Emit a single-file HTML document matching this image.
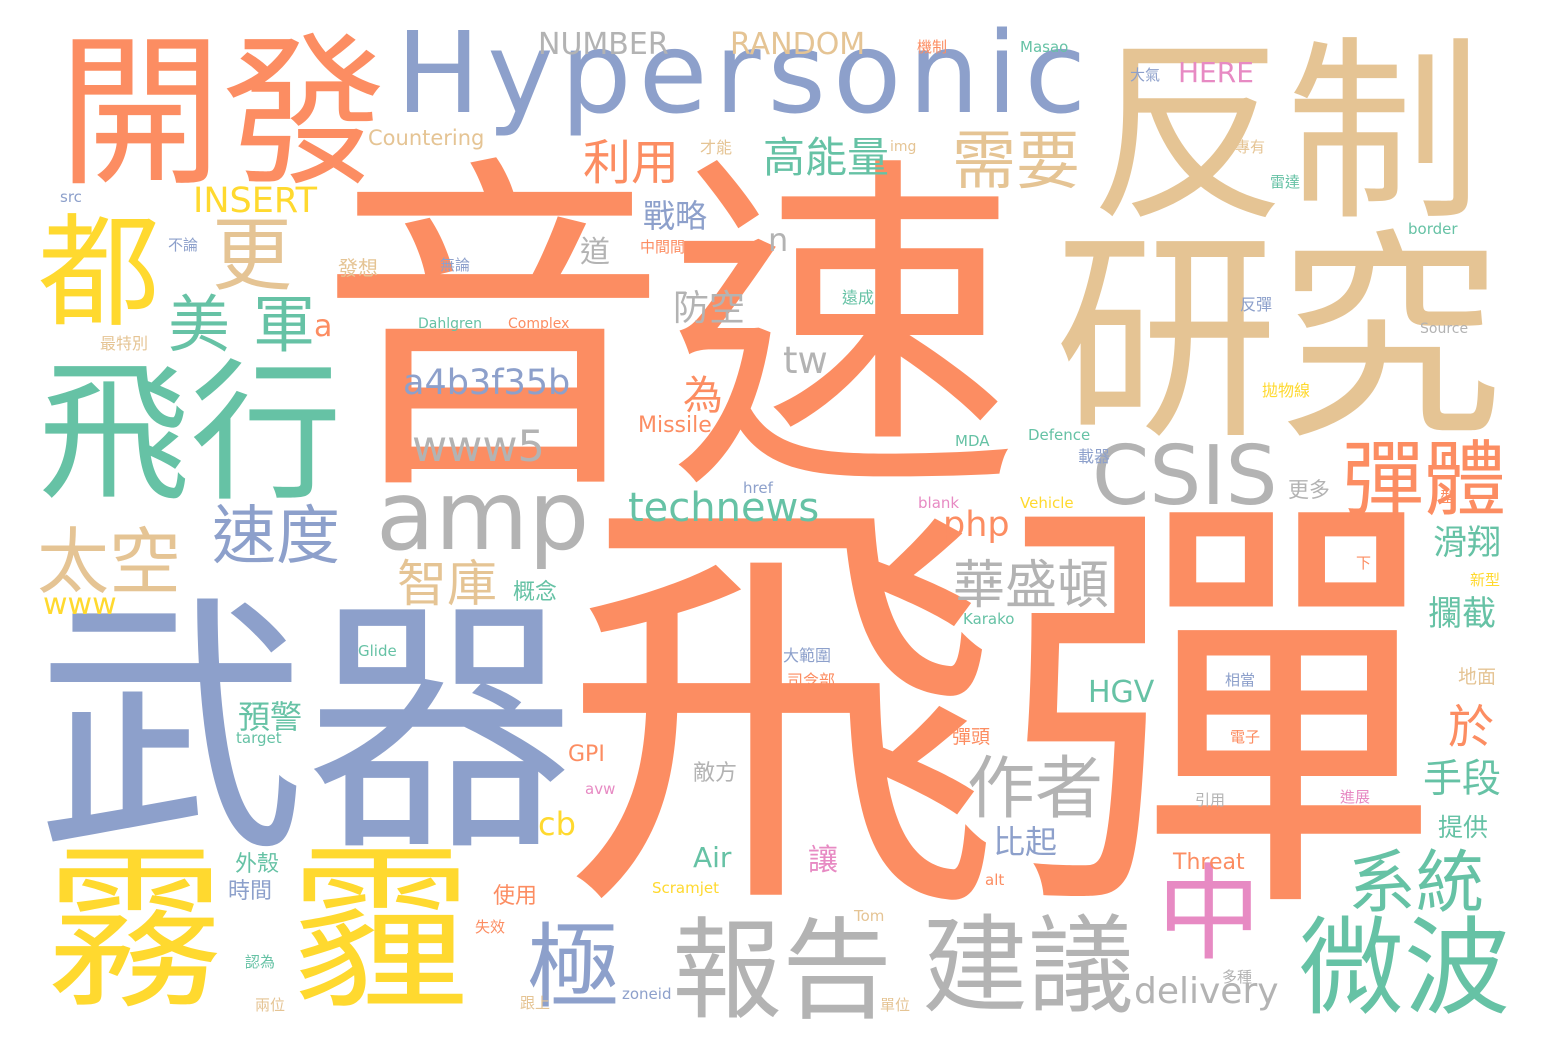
<!DOCTYPE html>
<html><head><meta charset="utf-8"><style>
html,body{margin:0;padding:0;background:#fff;}
body{width:1548px;height:1052px;position:relative;overflow:hidden;font-family:"DejaVu Sans","Noto Sans CJK TC",sans-serif;}
span{position:absolute;line-height:1;white-space:nowrap;}
.o{color:#fc8d62}.t{color:#e5c494}.b{color:#8da0cb}.g{color:#66c2a5}.y{color:#ffd92f}.s{color:#b3b3b3}.p{color:#e78ac3}.l{color:#a6d854}
</style></head><body>
<span class="o" style="left:318px;top:158px;font-size:350px">音速</span>
<span class="o" style="left:562px;top:494px;font-size:438px">飛彈</span>
<span class="b" style="left:36px;top:596px;font-size:270px">武器</span>
<span class="t" style="left:1090px;top:36px;font-size:196px">反制</span>
<span class="t" style="left:1054px;top:228px;font-size:224px">研究</span>
<span class="o" style="left:58px;top:32px;font-size:164px">開發</span>
<span class="b" style="left:396px;top:18px;font-size:112px;letter-spacing:7px">Hypersonic</span>
<span class="g" style="left:38px;top:358px;font-size:152px">飛行</span>
<span class="y" style="left:38px;top:212px;font-size:122px">都</span>
<span class="t" style="left:212px;top:216px;font-size:80px">更</span>
<span class="g" style="left:168px;top:294px;font-size:62px">美</span>
<span class="g" style="left:253px;top:294px;font-size:62px">軍</span>
<span class="o" style="left:314px;top:312px;font-size:30px">a</span>
<span class="y" style="left:46px;top:842px;font-size:178px">霧</span>
<span class="y" style="left:292px;top:842px;font-size:178px">霾</span>
<span class="s" style="left:672px;top:916px;font-size:110px">報告</span>
<span class="s" style="left:922px;top:914px;font-size:106px">建議</span>
<span class="g" style="left:1298px;top:916px;font-size:106px">微波</span>
<span class="b" style="left:527px;top:922px;font-size:92px">極</span>
<span class="p" style="left:1157px;top:862px;font-size:104px">中</span>
<span class="s" style="left:1134px;top:974px;font-size:36px">delivery</span>
<span class="g" style="left:1348px;top:850px;font-size:68px">系統</span>
<span class="s" style="left:1092px;top:436px;font-size:82px">CSIS</span>
<span class="o" style="left:1342px;top:440px;font-size:82px">彈體</span>
<span class="s" style="left:376px;top:468px;font-size:96px">amp</span>
<span class="b" style="left:212px;top:505px;font-size:64px">速度</span>
<span class="t" style="left:37px;top:526px;font-size:72px">太空</span>
<span class="t" style="left:952px;top:130px;font-size:64px">需要</span>
<span class="o" style="left:583px;top:139px;font-size:48px">利用</span>
<span class="g" style="left:763px;top:137px;font-size:42px">高能量</span>
<span class="s" style="left:967px;top:756px;font-size:68px">作者</span>
<span class="s" style="left:953px;top:560px;font-size:52px">華盛頓</span>
<span class="t" style="left:397px;top:559px;font-size:50px">智庫</span>
<span class="g" style="left:628px;top:488px;font-size:40px">technews</span>
<span class="b" style="left:403px;top:366px;font-size:35px">a4b3f35b</span>
<span class="s" style="left:412px;top:426px;font-size:43px">www5</span>
<span class="y" style="left:193px;top:184px;font-size:35px">INSERT</span>
<span class="s" style="left:538px;top:30px;font-size:30px">NUMBER</span>
<span class="t" style="left:730px;top:30px;font-size:30px">RANDOM</span>
<span class="t" style="left:368px;top:128px;font-size:21px">Countering</span>
<span class="b" style="left:643px;top:200px;font-size:32px">戰略</span>
<span class="s" style="left:673px;top:291px;font-size:36px">防空</span>
<span class="s" style="left:783px;top:342px;font-size:37px">tw</span>
<span class="s" style="left:768px;top:224px;font-size:32px">n</span>
<span class="o" style="left:683px;top:376px;font-size:40px">為</span>
<span class="o" style="left:638px;top:415px;font-size:22px">Missile</span>
<span class="o" style="left:943px;top:508px;font-size:35px">php</span>
<span class="g" style="left:1433px;top:526px;font-size:34px">滑翔</span>
<span class="g" style="left:1428px;top:597px;font-size:34px">攔截</span>
<span class="o" style="left:1448px;top:704px;font-size:46px">於</span>
<span class="g" style="left:1423px;top:760px;font-size:39px">手段</span>
<span class="g" style="left:1438px;top:815px;font-size:25px">提供</span>
<span class="g" style="left:1088px;top:678px;font-size:30px">HGV</span>
<span class="b" style="left:993px;top:826px;font-size:32px">比起</span>
<span class="p" style="left:808px;top:846px;font-size:30px">讓</span>
<span class="g" style="left:693px;top:844px;font-size:28px">Air</span>
<span class="y" style="left:538px;top:808px;font-size:32px">cb</span>
<span class="y" style="left:43px;top:590px;font-size:30px">www</span>
<span class="g" style="left:238px;top:701px;font-size:32px">預警</span>
<span class="g" style="left:235px;top:854px;font-size:22px">外殼</span>
<span class="b" style="left:228px;top:881px;font-size:22px">時間</span>
<span class="o" style="left:568px;top:744px;font-size:22px">GPI</span>
<span class="s" style="left:693px;top:763px;font-size:22px">敵方</span>
<span class="o" style="left:1173px;top:852px;font-size:22px">Threat</span>
<span class="g" style="left:513px;top:582px;font-size:22px">概念</span>
<span class="o" style="left:493px;top:886px;font-size:22px">使用</span>
<span class="p" style="left:1178px;top:59px;font-size:28px">HERE</span>
<span class="s" style="left:1288px;top:480px;font-size:21px">更多</span>
<span class="t" style="left:100px;top:336px;font-size:16px">最特別</span>
<span class="b" style="left:168px;top:238px;font-size:15px">不論</span>
<span class="b" style="left:60px;top:190px;font-size:15px">src</span>
<span class="t" style="left:338px;top:258px;font-size:20px">發想</span>
<span class="g" style="left:418px;top:317px;font-size:14px">Dahlgren</span>
<span class="o" style="left:508px;top:317px;font-size:14px">Complex</span>
<span class="g" style="left:842px;top:290px;font-size:16px">遠成</span>
<span class="g" style="left:1028px;top:428px;font-size:15px">Defence</span>
<span class="g" style="left:955px;top:434px;font-size:15px">MDA</span>
<span class="b" style="left:1078px;top:449px;font-size:16px">載器</span>
<span class="s" style="left:1420px;top:322px;font-size:14px">Source</span>
<span class="g" style="left:1408px;top:222px;font-size:15px">border</span>
<span class="y" style="left:1262px;top:383px;font-size:16px">拋物線</span>
<span class="b" style="left:1240px;top:297px;font-size:16px">反彈</span>
<span class="g" style="left:1020px;top:40px;font-size:15px">Masao</span>
<span class="o" style="left:917px;top:40px;font-size:15px">機制</span>
<span class="y" style="left:1020px;top:496px;font-size:15px">Vehicle</span>
<span class="p" style="left:918px;top:496px;font-size:15px">blank</span>
<span class="b" style="left:743px;top:481px;font-size:15px">href</span>
<span class="g" style="left:963px;top:612px;font-size:15px">Karako</span>
<span class="g" style="left:358px;top:644px;font-size:15px">Glide</span>
<span class="g" style="left:236px;top:731px;font-size:15px">target</span>
<span class="y" style="left:652px;top:881px;font-size:15px">Scramjet</span>
<span class="t" style="left:854px;top:909px;font-size:15px">Tom</span>
<span class="b" style="left:622px;top:987px;font-size:15px">zoneid</span>
<span class="p" style="left:585px;top:782px;font-size:15px">avw</span>
<span class="o" style="left:985px;top:873px;font-size:15px">alt</span>
<span class="b" style="left:783px;top:648px;font-size:16px">大範圍</span>
<span class="o" style="left:787px;top:673px;font-size:16px">司令部</span>
<span class="o" style="left:952px;top:728px;font-size:19px">彈頭</span>
<span class="b" style="left:1225px;top:673px;font-size:15px">相當</span>
<span class="t" style="left:1458px;top:668px;font-size:19px">地面</span>
<span class="o" style="left:1356px;top:556px;font-size:15px">下</span>
<span class="t" style="left:520px;top:996px;font-size:15px">跟上</span>
<span class="t" style="left:255px;top:998px;font-size:15px">兩位</span>
<span class="g" style="left:245px;top:955px;font-size:15px">認為</span>
<span class="o" style="left:475px;top:920px;font-size:15px">失效</span>
<span class="t" style="left:880px;top:998px;font-size:15px">單位</span>
<span class="s" style="left:1222px;top:970px;font-size:15px">多種</span>
<span class="o" style="left:640px;top:240px;font-size:15px">中間間</span>
<span class="b" style="left:440px;top:258px;font-size:15px">無論</span>
<span class="s" style="left:580px;top:238px;font-size:30px">道</span>
<span class="t" style="left:700px;top:140px;font-size:16px">才能</span>
<span class="t" style="left:890px;top:140px;font-size:14px">img</span>
<span class="t" style="left:1235px;top:140px;font-size:15px">專有</span>
<span class="g" style="left:1270px;top:175px;font-size:15px">雷達</span>
<span class="b" style="left:1130px;top:68px;font-size:15px">大氣</span>
<span class="o" style="left:1440px;top:490px;font-size:15px">型</span>
<span class="y" style="left:1470px;top:573px;font-size:15px">新型</span>
<span class="p" style="left:1340px;top:790px;font-size:15px">進展</span>
<span class="s" style="left:1195px;top:793px;font-size:15px">引用</span>
<span class="o" style="left:1230px;top:730px;font-size:15px">電子</span>
</body></html>
